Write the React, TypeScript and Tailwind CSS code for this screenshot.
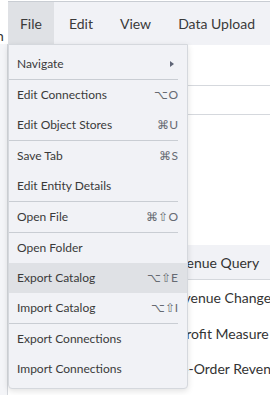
import { Fragment } from 'react';

type Item = { label: string; shortcut?: string; submenu?: boolean; active?: boolean; sepAfter?: boolean };

const items: Item[] = [
  { label: 'Navigate', submenu: true, sepAfter: true },
  { label: 'Edit Connections', shortcut: '⌥O' },
  { label: 'Edit Object Stores', shortcut: '⌘U', sepAfter: true },
  { label: 'Save Tab', shortcut: '⌘S' },
  { label: 'Edit Entity Details', sepAfter: true },
  { label: 'Open File', shortcut: '⌘⇧O', sepAfter: true },
  { label: 'Open Folder' },
  { label: 'Export Catalog', shortcut: '⌥⇧E', active: true },
  { label: 'Import Catalog', shortcut: '⌥⇧I', sepAfter: true },
  { label: 'Export Connections' },
  { label: 'Import Connections' },
];

const rows = [
  { text: 'Revenue Change', pad: 'pl-[160px]' },
  { text: 'Profit Measure', pad: 'pl-[170px]' },
  { text: 'Pre-Order Revenue', pad: 'pl-[160px]' },
];

export default function App() {
  return (
    <div className="relative w-[270px] h-[395px] overflow-hidden bg-white text-[#333] font-['Lato','Liberation_Sans',sans-serif]">
      <div className="flex h-full">
        <div className="w-[8px] shrink-0 flex flex-col">
          <div className="h-[44px] bg-white relative">
            <span className="absolute left-[-4px] top-[29px] text-[14px] leading-none">n</span>
          </div>
          <div className="flex-1 bg-[#f4f5f8] border-r border-[#d5d8dd]" />
        </div>
        <div className="flex-1 flex flex-col min-w-0">
          <div className="h-[44px] mt-px border-t border-[#c9cdd3] bg-[#f1f2f6] flex items-stretch text-[14px] text-[#3a3a3a] shrink-0">
            <div className="w-[47px] bg-[#dfe1e5] flex items-center justify-center">File</div>
            <div className="px-[15px] flex items-center">Edit</div>
            <div className="px-[12px] flex items-center">View</div>
            <div className="px-[15px] flex items-center whitespace-nowrap">Data Upload</div>
          </div>
          <div className="flex-1 flex flex-col">
            <div className="h-[41px] border-b border-[#d5d8dd]" />
            <div className="h-[29px] border-b border-[#d5d8dd]" />
            <div className="h-[130px]" />
            <div className="h-[35px] bg-[#f1f2f6] border-b border-[#d5d8dd] flex items-center pl-[156px] text-[14px] whitespace-nowrap">
              Revenue Query
            </div>
            {rows.map((r) => (
              <div key={r.text} className={`h-[35.5px] flex items-center text-[14px] whitespace-nowrap ${r.pad}`}>
                {r.text}
              </div>
            ))}
          </div>
        </div>
      </div>

      <div className="absolute left-[8px] top-[44px] w-[180px] pt-[4px] pb-[4px] bg-[#f1f2f6] border border-[#d5d8dd] rounded-b-[4px] shadow-[0_2px_6px_rgba(0,0,0,0.12)] text-[12px] text-[#3a3a3a]">
        {items.map((it) => (
          <Fragment key={it.label}>
            <div className={`h-[30px] flex items-center pl-[8px] pr-[9px] ${it.active ? 'bg-[#dfe1e5]' : ''}`}>
              <span className="flex-1 whitespace-nowrap">{it.label}</span>
              {it.shortcut && <span className="text-[12px] text-[#666a72]">{it.shortcut}</span>}
              {it.submenu && (
                <svg width="4" height="6" viewBox="0 0 4 6" className="mr-[4px]">
                  <path d="M0 0 L4 3 L0 6 Z" fill="#5f6577" />
                </svg>
              )}
            </div>
            {it.sepAfter && <div className="h-px bg-[#c9cdd3] mr-[9px]" />}
          </Fragment>
        ))}
      </div>
    </div>
  );
}
